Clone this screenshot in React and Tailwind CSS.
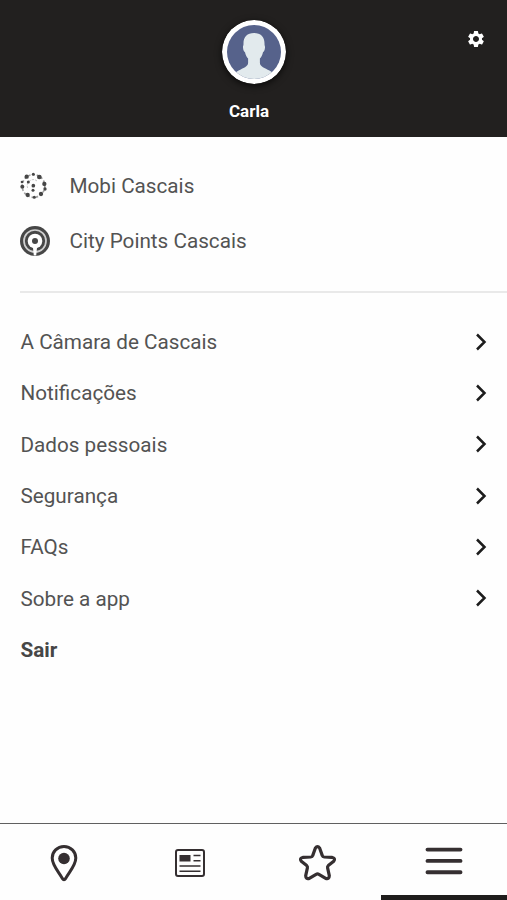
import { MdSettings } from 'react-icons/md';

const links = [
  'A Câmara de Cascais',
  'Notificações',
  'Dados pessoais',
  'Segurança',
  'FAQs',
  'Sobre a app',
];

// [cx, cy, r] of every dot in the Mobi emblem
const mobiDots = [
  [70, 43, 4.5],
  [88, 51, 7],
  [103, 72, 6.5],
  [105, 87, 5],
  [93, 102, 6.5],
  [73, 112, 4.5],
  [53, 105, 6.5],
  [37, 80, 6],
  [36, 66, 4],
  [50, 50, 6.5],
  [55, 66, 4.5],
  [70, 77, 5.5],
  [69, 91, 4.5],
];

function Avatar() {
  return (
    <svg viewBox="0 0 64 64" className="w-16 h-16 rounded-full shadow-[0_2px_7px_rgba(0,0,0,0.7)]">
      <defs>
        <clipPath id="avatar">
          <circle cx="32" cy="32" r="27" />
        </clipPath>
      </defs>
      <circle cx="32" cy="32" r="32" fill="#fff" />
      <g clipPath="url(#avatar)">
        <rect width="64" height="64" fill="#56628b" />
        <path
          d="M32 13c-7 0-10.800 4-10.500 11 0 1.500-.6 2-.5 3.500.2 2.500.8 4 2 4.700.6 3 1.800 5 3.100 6.300v4.500c0 3.500-5 5.200-9.500 7.500-3.500 1.700-6 4-7.300 7V64h45.400v-6.500c-1.300-3-3.800-5.300-7.300-7-4.500-2.300-9.500-4-9.500-7.500v-4.500c1.300-1.300 2.500-3.300 3.100-6.300 1.200-.7 1.800-2.200 2-4.700.1-1.500-.5-2-.5-3.500.3-7-3.500-11-10.500-11z"
          fill="#e2eaed"
        />
      </g>
    </svg>
  );
}

function MobiIcon() {
  return (
    <svg viewBox="30 36 84 84" className="w-7 h-7" fill="#464646">
      <circle cx="70.500" cy="78" r="34" fill="none" stroke="#a0a0a0" strokeWidth="5" strokeDasharray="7 6" />
      <path d="M53 84a18 18 0 0 1 7-22q11-7 21 1" fill="none" stroke="#bbb" strokeWidth="2.500" strokeDasharray="7 3" />
      {mobiDots.map(([cx, cy, r]) => (
        <circle key={`${cx}-${cy}`} cx={cx} cy={cy} r={r} />
      ))}
    </svg>
  );
}

function CityPointsIcon() {
  return (
    <svg viewBox="0 0 30 30" className="w-[30px] h-[30px]" fill="none">
      <circle cx="15" cy="15" r="15" fill="#474747" />
      <circle cx="15" cy="15" r="11" stroke="#d0d0d0" strokeWidth="1.700" />
      <circle cx="15" cy="15" r="7.300" fill="#fff" />
      <path d="M12.800 20h4.400l-1 9.500h-2.400z" fill="#fff" />
      <circle cx="15" cy="15" r="3" fill="#474747" />
    </svg>
  );
}

function Chevron() {
  return (
    <svg viewBox="0 0 12 18" className="w-3 h-[18px]" fill="none" stroke="#1c1c1c" strokeWidth="2.500">
      <path d="M2 1.500 9.500 9 2 16.500" />
    </svg>
  );
}

function PinIcon() {
  return (
    <svg viewBox="0 0 28 38" className="w-7 h-[38px]" fill="none" stroke="#352f31" strokeWidth="3">
      <path d="M14 2.500C7.300 2.500 2.200 7.700 2.200 14c0 7.500 6.800 14 10.100 20.400q1.700 2.600 3.400 0C19 28 25.800 21.500 25.800 14 25.800 7.700 20.700 2.500 14 2.500z" />
      <circle cx="14" cy="14.500" r="5.800" fill="#352f31" stroke="none" />
    </svg>
  );
}

function NewsIcon() {
  return (
    <svg viewBox="0 0 30 28" className="w-[30px] h-7" fill="none" stroke="#352f31">
      <rect x="1" y="1" width="28" height="26" rx="2" strokeWidth="2" />
      <rect x="4.500" y="6" width="11" height="6.500" fill="#352f31" stroke="none" />
      <path d="M18.500 6.500h7M18.500 11.800h7M4.500 17h21M4.500 22.200h21" strokeWidth="1.500" />
    </svg>
  );
}

function StarIcon() {
  return (
    <svg viewBox="0 0 39 37" className="w-[39px] h-[37px]" fill="none" stroke="#352f31" strokeWidth="3.200" strokeLinejoin="round">
      <path d="M17.300 4.200Q19.500 1 21.700 4.200L24.300 11.600Q24.700 12.900 26.200 13L33.800 13.300Q38 14.200 35.700 17.300L30.300 21.600Q29.300 22.500 29.600 23.900L31.300 31.600Q31.200 35.600 27.700 34.400L20.900 30.300Q19.500 29.500 18.100 30.300L11.300 34.400Q7.800 35.600 7.700 31.600L9.400 23.900Q9.700 22.500 8.700 21.600L3.300 17.300Q1 14.200 5.200 13.300L12.800 13Q14.300 12.900 14.700 11.600Z" />
    </svg>
  );
}

function MenuIcon() {
  return (
    <svg viewBox="0 0 38 28" className="w-[38px] h-7" stroke="#352f31" strokeWidth="3.900" strokeLinecap="round">
      <path d="M2.500 2.600h33M2.500 13.900h33M2.500 25.200h33" />
    </svg>
  );
}

export default function App() {
  return (
    <div className="flex flex-col w-[507px] h-[900px] overflow-hidden bg-[#fefefe] font-['Roboto',sans-serif] text-[20.700px] text-[#535353]">
      <header className="grid grid-cols-[1fr_64px_1fr] h-[137px] shrink-0 content-start pt-5 bg-[#22201f] text-white">
        <div />
        <Avatar />
        <button type="button" aria-label="Definições" className="justify-self-end self-start mt-[9px] mr-[21px]">
          <MdSettings size={20} />
        </button>
        <p className="col-span-3 mt-[15px] pr-[9px] text-center text-[17px] leading-6 font-bold">Carla</p>
      </header>

      <main className="flex-1">
        <section className="ml-5 pt-[21px] h-[156px] border-b-2 border-[#e9e9e9]">
          <div className="flex items-center h-[55px]">
            <div className="w-[49.500px]"><MobiIcon /></div>
            <span className="pt-[2px]">Mobi Cascais</span>
          </div>
          <div className="flex items-center h-[55px]">
            <div className="w-[49.500px]"><CityPointsIcon /></div>
            <span className="pt-[2px]">City Points Cascais</span>
          </div>
        </section>

        <ul className="pt-[23px] pl-[20.500px] pr-5">
          {links.map((label) => (
            <li key={label} className="flex items-center justify-between h-[51.300px]">
              <span className="pt-[2px]">{label}</span>
              <Chevron />
            </li>
          ))}
          <li className="flex items-center h-[51.300px] pt-[2px] font-bold text-[#464646]">Sair</li>
        </ul>
      </main>

      <nav className="grid grid-cols-4 h-[77px] shrink-0 border-t-[1.500px] border-[#606060]">
        <div className="flex justify-center pt-5 pl-[2px]"><PinIcon /></div>
        <div className="flex justify-center pt-[25px]"><NewsIcon /></div>
        <div className="flex justify-center pt-5 pl-[2px]"><StarIcon /></div>
        <div className="flex flex-col items-center justify-between ml-px pr-px pt-[23px] border-b-[5px] border-[#1f1d1c]"><MenuIcon /></div>
      </nav>
    </div>
  );
}
